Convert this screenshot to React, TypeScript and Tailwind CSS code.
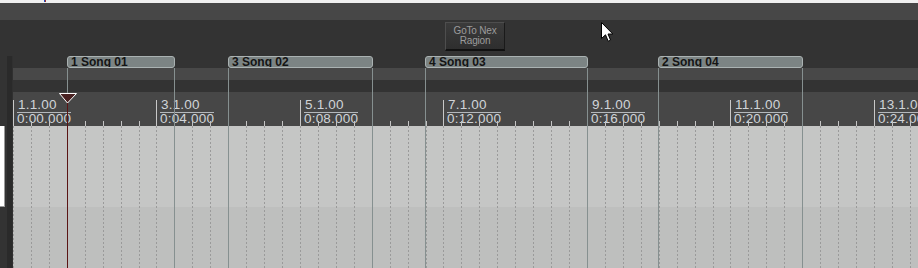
import React from "react";

const OX = 13;
const OY = 56;
const MAJORS = [13, 156, 300, 443, 587, 730, 874];
const LABELS: [string, string][] = [
  ["1.1.00", "0:00.000"],
  ["3.1.00", "0:04.000"],
  ["5.1.00", "0:08.000"],
  ["7.1.00", "0:12.000"],
  ["9.1.00", "0:16.000"],
  ["11.1.00", "0:20.000"],
  ["13.1.00", "0:24.000"],
];
const REGIONS = [
  { name: "1 Song 01", s: 67, e: 174 },
  { name: "3 Song 02", s: 228, e: 372 },
  { name: "4 Song 03", s: 425, e: 587 },
  { name: "2 Song 04", s: 658, e: 802 },
];
const MINORS: number[] = [];
MAJORS.forEach((m) => {
  for (let j = 1; j < 8; j++) {
    const x = m + Math.round(j * 17.93);
    if (x < 918) MINORS.push(x);
  }
});
const PLAYHEAD = 67;

function Overlay() {
  const lx = (x: number) => x - OX + 0.5;
  const ly = (y: number) => y - OY;
  return (
    <svg
      className="absolute inset-0 pointer-events-none"
      width={905}
      height={212}
      viewBox="0 0 905 212"
    >
      {[...MAJORS, ...MINORS].map((x) => (
        <line
          key={"g" + x}
          x1={lx(x)}
          x2={lx(x)}
          y1={ly(126)}
          y2={ly(268)}
          stroke="#9a9a9a"
          strokeWidth={1}
          strokeDasharray="2 2"
        />
      ))}
      {MINORS.map((x) => (
        <line
          key={"t" + x}
          x1={lx(x)}
          x2={lx(x)}
          y1={ly(121)}
          y2={ly(126)}
          stroke="#c4c4c4"
          strokeWidth={1}
        />
      ))}
      {MAJORS.map((x) => (
        <line
          key={"M" + x}
          x1={lx(x)}
          x2={lx(x)}
          y1={ly(100)}
          y2={ly(126)}
          stroke="#c8c8c8"
          strokeWidth={1}
        />
      ))}
      {REGIONS.flatMap((r) => [r.s, r.e]).map((x) => (
        <line
          key={"r" + x}
          x1={lx(x)}
          x2={lx(x)}
          y1={ly(68)}
          y2={ly(268)}
          stroke="#869090"
          strokeWidth={1}
        />
      ))}
      <line
        x1={lx(PLAYHEAD)}
        x2={lx(PLAYHEAD)}
        y1={ly(100)}
        y2={ly(268)}
        stroke="#5a1414"
        strokeWidth={1}
      />
      <polygon
        points={`${lx(59)},${ly(93.5)} ${lx(76)},${ly(93.5)} ${lx(PLAYHEAD)},${ly(103)}`}
        fill="#4a2222"
        stroke="#ffffff"
        strokeWidth={1}
      />
    </svg>
  );
}

export default function App() {
  return (
    <div className="relative w-[918px] h-[268px] overflow-hidden bg-[#333333] font-['Liberation_Sans',Arial,sans-serif]">
      <div className="h-[3px] bg-[#f0f0f0] flex">
        <div className="ml-[44px] w-[1px] h-[2px] bg-[#2050c0]" />
        <div className="w-[1px] h-[2px] bg-[#a03030]" />
      </div>
      <div className="h-[17px] bg-[#474747]" />
      <div className="h-[36px] flex items-start">
        <div className="ml-[445px] mt-[2px] w-[60px] h-[29px] flex flex-col items-center justify-center border border-[#4e4e4e] border-b-2 border-b-[#111111] border-r-[#1a1a1a] bg-gradient-to-b from-[#3b3b3b] to-[#2e2e2e] text-[10px] leading-[10px] text-[#9c9c9c] tracking-[-0.2px]">
          <span>GoTo Nex</span>
          <span>Ragion</span>
        </div>
      </div>
      <div className="flex h-[212px]">
        <div className="w-[13px] flex">
          <div className="w-[7px] flex flex-col">
            <div className="h-[70px]" />
            <div className="w-[5px] h-[81px] bg-white border-r border-b border-[#9a9a9a]" />
          </div>
          <div className="w-[5px] bg-[#2a2a2a]" />
          <div className="w-[1px] bg-[#303030]" />
        </div>
        <div className="relative flex-1 flex flex-col">
          <div className="relative h-[12px]">
            {REGIONS.map((r) => (
              <div
                key={r.name}
                className="absolute top-0 h-[12px] rounded-[3px] border border-[#aab2b2] bg-[#7c8484] overflow-hidden pl-[3px] text-[12px] leading-[11px] font-bold text-[#141414] whitespace-nowrap"
                style={{ left: r.s - OX, width: r.e - r.s + 1 }}
              >
                {r.name}
              </div>
            ))}
          </div>
          <div className="h-[12px] bg-[#484848]" />
          <div className="h-[12px] bg-[#333333]" />
          <div className="relative h-[34px] bg-[#474747]">
            {LABELS.map(([a, b], i) => (
              <div
                key={a}
                className="absolute top-[6px] flex flex-col text-[13.5px] leading-[14px] tracking-[0.2px] text-[#d0d4d8] whitespace-nowrap"
                style={{ left: MAJORS[i] - OX + 4 }}
              >
                <span className="pl-[1px] border-b border-[#b4b8bc]">{a}</span>
                <span className="leading-[12px]">{b}</span>
              </div>
            ))}
          </div>
          <div className="h-[81px] bg-[#c5c6c5]" />
          <div className="flex-1 bg-[#bebfbe]" />
          <Overlay />
        </div>
      </div>
      <svg
        className="absolute left-[601px] top-[22px] pointer-events-none"
        width="14"
        height="21"
        viewBox="0 0 14 21"
      >
        <path
          d="M0.5 0.5 L0.5 16.5 L4.5 12.8 L7.2 19.2 L9.6 18.2 L7 12 L11.8 12 Z"
          fill="#ffffff"
          stroke="#000000"
          strokeWidth={1}
          strokeLinejoin="miter"
        />
      </svg>
    </div>
  );
}
